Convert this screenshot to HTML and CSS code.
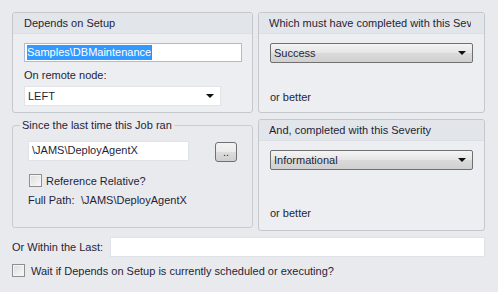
FILE: index.html
```html
<!DOCTYPE html>
<html lang="en">
<head>
    <meta charset="UTF-8">
    <title>Dependency</title>
    <link rel="stylesheet" href="styles.css">
</head>
<body>
<div class="dialog">
    <div class="grid">
        <section class="panel setup">
            <div class="panel-head">Depends on Setup</div>
            <div class="panel-body">
                <div class="textbox focus"><span class="selected">Samples\DBMaintenance</span><span class="caret"></span></div>
                <div class="caption">On remote node:</div>
                <div class="combo flat">LEFT<span class="arrow"></span></div>
            </div>
        </section>

        <section class="panel severity">
            <div class="panel-head"><span class="head-text">Which must have completed with this Severity</span></div>
            <div class="panel-body">
                <div class="combo">Success<span class="arrow"></span></div>
                <div class="better">or better</div>
            </div>
        </section>

        <fieldset class="since">
            <legend>Since the last time this Job ran</legend>
            <div class="path-row">
                <div class="textbox path">\JAMS\DeployAgentX</div>
                <button class="browse" type="button">..</button>
            </div>
            <label class="check"><span class="box"></span>Reference Relative?</label>
            <div class="full-path"><span class="fp-label">Full Path:</span>\JAMS\DeployAgentX</div>
        </fieldset>

        <section class="panel severity lower">
            <div class="panel-head"><span class="head-text">And, completed with this Severity</span></div>
            <div class="panel-body">
                <div class="combo">Informational<span class="arrow"></span></div>
                <div class="better">or better</div>
            </div>
        </section>
    </div>

    <div class="within-row">
        <span class="within-label">Or Within the Last:</span>
        <div class="textbox within"></div>
    </div>
    <label class="check wait"><span class="box"></span>Wait if Depends on Setup is currently scheduled or executing?</label>
</div>
</body>
</html>
```

FILE: styles.css
```css
body {
    margin: 0;
    background-color: #e9eaee;
    font-family: "Liberation Sans", Arial, sans-serif;
    font-size: 11px;
    color: #1f1f38;
}
.dialog {
    padding: 12px 13px 0 12px;
}
.grid {
    display: grid;
    grid-template-columns: 241px 227px;
    grid-template-rows: 101px 112px;
    column-gap: 5px;
    row-gap: 6px;
}
.panel {
    box-sizing: border-box;
    border: 1px solid #c4c7cc;
    border-radius: 3px;
    background-color: #eceef1;
    overflow: hidden;
}
.panel-head {
    height: 20px;
    line-height: 20px;
    padding-left: 11px;
    background-color: #e2e5e9;
    border-bottom: 1px solid #dcdfe3;
    white-space: nowrap;
    overflow: hidden;
}
.severity .panel-head {
    padding-left: 10px;
}
.head-text {
    display: block;
    width: 202px;
    overflow: hidden;
}
.panel-body {
    padding: 9px 11px 0 11px;
    display: flex;
    flex-direction: column;
}
.textbox {
    box-sizing: border-box;
    height: 19px;
    background: #fff;
    border: 1px solid #dfe2e6;
    line-height: 17px;
    padding-left: 2px;
    white-space: nowrap;
}
.textbox.focus {
    width: 218px;
    border-color: #a9bdd9;
    display: flex;
    align-items: center;
}
.selected {
    background-color: #3399ff;
    color: #fff;
    line-height: 15px;
}
.caret {
    width: 1px;
    height: 15px;
    background: #d9640f;
}
.caption {
    margin-top: 5px;
    height: 16px;
    line-height: 16px;
}
.combo {
    box-sizing: border-box;
    position: relative;
    height: 20px;
    line-height: 18px;
    padding-left: 3px;
    border: 1px solid #707070;
    border-radius: 2px;
    background: linear-gradient(#f4f4f4, #e5e5e5 50%, #dadada 51%, #d0d0d0);
    width: 203px;
}
.combo.flat {
    width: 197px;
    margin-top: 3px;
    background: #fff;
    border-color: #e2e4e8;
    border-radius: 0;
}
.arrow {
    position: absolute;
    right: 6px;
    top: 7px;
    border-left: 4px solid transparent;
    border-right: 4px solid transparent;
    border-top: 4px solid #111;
}
.better {
    margin-top: 28px;
}
.lower .better {
    margin-top: 37px;
}
.since {
    align-self: start;
    margin: 0;
    padding: 0 0 0 15px;
    height: 109px;
    box-sizing: border-box;
    border: 1px solid #c9ccd0;
    border-radius: 3px;
    min-width: 0;
}
.since legend {
    font-size: 11px;
    padding: 0 2px;
    margin-left: -8px;
}
.path-row {
    display: flex;
    align-items: flex-start;
    margin-top: 10px;
}
.textbox.path {
    width: 161px;
    height: 20px;
    padding-left: 3px;
}
.browse {
    margin: 1px 0 0 26px;
    width: 22px;
    height: 20px;
    padding: 0;
    border: 1px solid #707070;
    border-radius: 3px;
    background: linear-gradient(#f2f2f2, #ebebeb 50%, #dddddd 51%, #cfcfcf);
    font-family: inherit;
    font-size: 11px;
    color: #1f1f38;
    line-height: 14px;
}
.check {
    display: flex;
    align-items: center;
}
.box {
    box-sizing: border-box;
    width: 13px;
    height: 13px;
    border: 1px solid #8f8f8f;
    background: linear-gradient(135deg, #dcdcdc, #fafafa);
    box-shadow: inset 0 0 0 1px #f4f4f4;
    margin-right: 4px;
}
.since .check {
    margin: 12px 0 0 1px;
}
.full-path {
    margin-top: 7px;
    display: flex;
}
.fp-label {
    width: 53px;
}
.within-row {
    display: flex;
    align-items: center;
    margin-top: 6px;
    white-space: nowrap;
}
.within-label {
    width: 98px;
}
.textbox.within {
    width: 376px;
    height: 20px;
}
.check.wait {
    margin-top: 7px;
}
.wait .box {
    margin-right: 6px;
}
```
